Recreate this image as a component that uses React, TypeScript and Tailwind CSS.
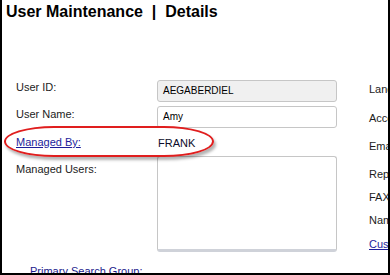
import React from 'react';

const Label = ({ children, className = '' }: { children: React.ReactNode; className?: string }) => (
  <span className={`text-[11px] leading-[14px] text-[#1c1c1c] ${className}`}>{children}</span>
);

export default function App() {
  const rightLabels = [
    { text: 'Language:', mt: 'mt-[2px]' },
    { text: 'Account:', mt: 'mt-[15px]' },
    { text: 'Email:', mt: 'mt-[14px]' },
    { text: 'Reports To:', mt: 'mt-[14px]' },
    { text: 'FAX:', mt: 'mt-[9px]' },
    { text: 'Name Format:', mt: 'mt-[9px]' },
  ];

  return (
    <div className="relative w-[390px] h-[275px] overflow-hidden bg-white border-x-2 border-b-2 border-black font-['Liberation_Sans',Arial,sans-serif]">
      <h1 className="pl-[4px] pt-[3px] text-[16px] leading-[18px] font-bold text-black whitespace-nowrap">
        User Maintenance&nbsp;&nbsp;|&nbsp;&nbsp;Details
      </h1>

      <div className="flex mt-[59px] whitespace-nowrap">
        {/* Left form */}
        <div className="flex flex-col pl-[14px]">
          <div className="flex">
            <Label className="w-[141px]">User ID:</Label>
            <div className="w-[180px] h-[22px] rounded-[3px] border border-[#c6c6c6] bg-[#f0f0f0] px-[5px] text-[10px] leading-[20px] text-black">
              AEGABERDIEL
            </div>
          </div>

          <div className="flex mt-[4px]">
            <Label className="w-[141px] mt-[1px]">User Name:</Label>
            <div className="w-[180px] h-[22px] rounded-[3px] border border-[#c6c6c6] bg-white px-[5px] text-[10px] leading-[20px] text-black">
              Amy
            </div>
          </div>

          <div className="flex h-[28px] pt-[7px]">
            <a className="w-[141px] text-[11px] leading-[14px] text-[#1d1d9b] underline">Managed By:</a>
            <span className="pl-[1px] text-[11px] leading-[14px] mt-[1px] text-[#0c0c2a]">FRANK</span>
          </div>

          <div className="flex">
            <Label className="w-[141px] mt-[6px]">Managed Users:</Label>
            <div className="w-[180px] h-[96px] rounded-[3px] border border-[#c6c6c6] border-b-[3px] border-b-[#cfd2d9] bg-white" />
          </div>

          <a className="ml-[14px] mt-[12px] text-[11px] leading-[14px] text-[#1a1a8c]">Primary Search Group:</a>
        </div>

        {/* Right form (clipped) */}
        <div className="flex flex-col ml-[32px]">
          {rightLabels.map((l) => (
            <Label key={l.text} className={l.mt}>
              {l.text}
            </Label>
          ))}
          <a className="mt-[10px] text-[11px] leading-[14px] text-[#1d1d9b] underline">Custom Fields</a>
        </div>
      </div>

      {/* Red highlight ring */}
      <div className="absolute left-[2px] top-[126px] w-[210px] h-[31px] rounded-[50px/15.5px] border-2 border-[#e01e1e] shadow-[2px_3px_3px_rgba(0,0,0,0.3)] pointer-events-none" />
    </div>
  );
}
